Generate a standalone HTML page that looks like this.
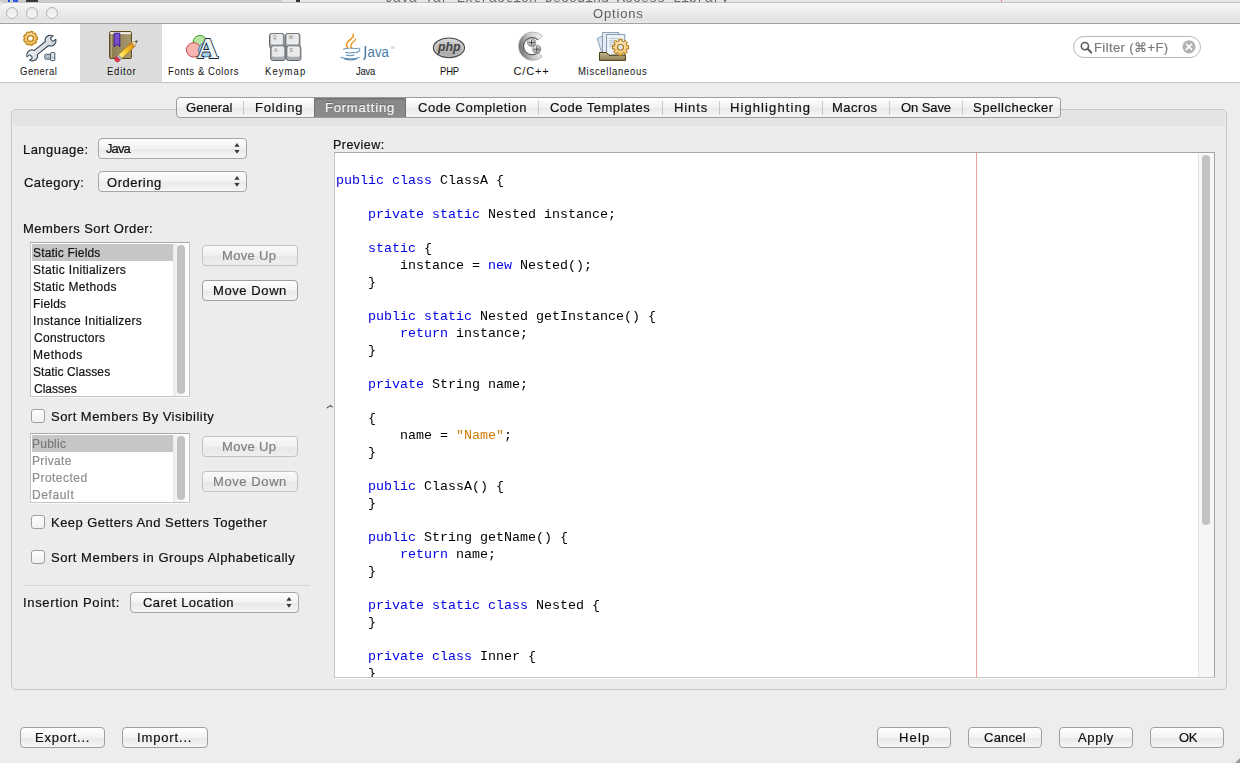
<!DOCTYPE html>
<html><head><meta charset="utf-8">
<style>
*{margin:0;padding:0;box-sizing:border-box}
html,body{width:1240px;height:763px;overflow:hidden;background:#ededed;font-family:"Liberation Sans",sans-serif;color:#000}
.a{position:absolute}
.t{position:absolute;white-space:nowrap;line-height:20px;will-change:transform;-webkit-text-stroke:0.2px currentColor}
#strip{left:0;top:0;width:1240px;height:2px;background:linear-gradient(90deg,#cdcdcd 0,#cdcdcd 282px,#e6e6e6 282px)}
#title{left:0;top:2px;width:1244px;height:22px;background:linear-gradient(#f6f6f6,#e3e3e3 85%,#e8e8e8);border-bottom:1px solid #a2a2a2;border-top:1px solid #c4c4c4;border-radius:5px 5px 0 0}
.circ{position:absolute;top:7px;width:12px;height:12px;border-radius:50%;border:1px solid #b4b4b4;background:linear-gradient(#eaeaea,#f8f8f8)}
#toolbar{left:0;top:24px;width:1240px;height:59px;background:#fff;border-bottom:1px solid #c4c4c4}
#sel{left:80px;top:24px;width:82px;height:58px;background:#dcdcdc}
#panel{left:11px;top:109px;width:1216px;height:581px;border:1px solid #c6c6c6;border-radius:5px;background:#ececec}
#band{left:13px;top:110px;width:1212px;height:16px;background:#e4e4e4;border-radius:4px 4px 0 0}
#tabs{left:176px;top:97px;width:885px;height:21px;border:1px solid #9b9b9b;border-radius:4px;background:linear-gradient(#ffffff,#f1f1f1 50%,#e9e9e9 51%,#f5f5f5);overflow:hidden}
.sep{position:absolute;top:3px;width:1px;height:14px;background:#c8c8c8}
.combo{position:absolute;height:20px;border:1px solid #a5a5a5;border-radius:4px;background:linear-gradient(#fefefe,#f2f2f2 50%,#e8e8e8 51%,#f6f6f6)}
.list{position:absolute;border:1px solid #c3c3c3;border-top-color:#a9a9a9;background:#fff;box-shadow:0 1px 0 #fafafa}
.sb2{position:absolute;background:linear-gradient(90deg,#ebebeb,#f6f6f6 35%,#fafafa 85%,#fff)}
.row{position:absolute;left:1px;height:17px;width:141px}
.sb{position:absolute;background:#f6f6f6;border-left:1px solid #e6e6e6}
.thumb{position:absolute;background:#c2c2c2;border-radius:4px}
.btn{position:absolute;height:21px;border:1px solid #9f9f9f;border-radius:4px;background:linear-gradient(#ffffff,#f3f3f3 50%,#e9e9e9 51%,#f4f4f4)}
.dis{border-color:#c2c2c2;background:linear-gradient(#fafafa,#f0f0f0 50%,#e8e8e8 51%,#eeeeee)}
.cb{position:absolute;width:14px;height:14px;border:1px solid #9e9e9e;border-radius:3px;background:linear-gradient(#fff,#f0f0f0)}
#editor{left:334px;top:152px;width:881px;height:526px;border:1px solid #a6a6a6;border-bottom-color:#c8c8c8;border-left-color:#c4c4c4;background:#fff;overflow:hidden;box-shadow:0 1px 0 #fafafa}
pre{position:absolute;left:1px;top:2px;will-change:transform;font-family:"Liberation Mono",monospace;font-size:13.333px;line-height:17px;color:#000}
.k{color:#0000e6}
.s{color:#ce7b00}
</style></head><body>
<div class="shape"><div class="a" id="strip"></div>
<div class="a" style="left:385px;top:-8px;will-change:transform;font-family:'Liberation Mono',monospace;font-size:13.333px;line-height:13px;color:#6a6a6a;white-space:pre">Java Tar Extraction Decoding Access Library</div>
<div class="a" style="left:8px;top:0;width:2px;height:2px;background:#1a4fd6"></div>
<div class="a" style="left:13px;top:0;width:5px;height:2px;background:#2a5ce0"></div>
<div class="a" style="left:26px;top:0;width:12px;height:2px;background:#3a3a3a"></div>
<div class="a" style="left:296px;top:0;width:4px;height:2px;background:#333"></div>
<div class="a" style="left:1001px;top:0;width:1px;height:2px;background:#e88080"></div>
<div class="a" id="title"></div>
<div class="circ" style="left:6px"></div>
<div class="circ" style="left:26px"></div>
<div class="circ" style="left:46px"></div>
<div class="a" id="toolbar"></div>
<div class="a" id="sel"></div>
<svg class="a" style="left:18px;top:28px" width="44" height="36" viewBox="0 0 44 36"><defs><linearGradient id="gw" x1="0" y1="0" x2="1" y2="1"><stop offset="0" stop-color="#f4f5f6"/><stop offset="1" stop-color="#c9ced3"/></linearGradient>
<radialGradient id="gg" cx="0.5" cy="0.4" r="0.6"><stop offset="0" stop-color="#fff3d8"/><stop offset="1" stop-color="#f0b850"/></radialGradient></defs>
<path d="M19.37,9.06 L19.37,11.74 L18.29,11.53 L17.66,13.26 L18.62,13.79 L16.91,15.84 L16.21,14.99 L14.61,15.91 L15.01,16.94 L12.38,17.40 L12.40,16.30 L10.58,15.98 L10.22,17.02 L7.91,15.68 L8.63,14.85 L7.44,13.44 L6.50,14.01 L5.59,11.50 L6.67,11.32 L6.67,9.48 L5.59,9.30 L6.50,6.79 L7.44,7.36 L8.63,5.95 L7.91,5.12 L10.22,3.78 L10.58,4.82 L12.40,4.50 L12.38,3.40 L15.01,3.86 L14.61,4.89 L16.21,5.81 L16.91,4.96 L18.62,7.01 L17.66,7.54 L18.29,9.27Z" fill="url(#gg)" stroke="#c08418" stroke-width="1.1" stroke-linejoin="round"/>
<circle cx="12.5" cy="10.4" r="3.0" fill="#fff" stroke="#c8861a" stroke-width="1.5"/>
<g transform="translate(14.2,27.4) rotate(-38.8)" fill="url(#gw)" stroke="#34495c" stroke-width="1.1" stroke-linejoin="round">
<path d="M-5.0,-2.2 L-2.0,-2.2 L-1.2,-1.4 L-1.2,1.4 L-2.0,2.2 L-5.0,2.2 A5.6,5.6 0 0 0 3.2,4.6 L4.5,2.6 L19,2.6 L20.3,4.6 A5.6,5.6 0 0 0 28.5,2.2 L25.5,2.2 L24.7,1.4 L24.7,-1.4 L25.5,-2.2 L28.5,-2.2 A5.6,5.6 0 0 0 20.3,-4.6 L19,-2.6 L4.5,-2.6 L3.2,-4.6 A5.6,5.6 0 0 0 -5.0,-2.2 Z"/>
</g>
<rect x="26.9" y="26.3" width="6.4" height="4.8" rx="0.6" fill="#f2f4f6" stroke="#3c4f60" stroke-width="1"/>
<path d="M28.9,26.6 V30.8 M30.9,26.6 V30.8" stroke="#6d7b88" stroke-width="0.9"/>
<rect x="32.6" y="24.6" width="4.2" height="8" rx="0.9" fill="#e4e9ee" stroke="#3c4f60" stroke-width="1"/>
<path d="M33.4,29.5 H36" stroke="#b8c2cc" stroke-width="1.5"/>
</svg>
<svg class="a" style="left:104px;top:28px" width="38" height="36" viewBox="0 0 38 36"><defs><linearGradient id="bk" x1="0" x2="1"><stop offset="0" stop-color="#8c7c50"/><stop offset="1" stop-color="#a89a70"/></linearGradient>
<linearGradient id="pc" x1="0" y1="0" x2="1" y2="0"><stop offset="0" stop-color="#fff080"/><stop offset="0.5" stop-color="#f3c62c"/><stop offset="1" stop-color="#e09010"/></linearGradient></defs>
<rect x="5.6" y="3.5" width="21.8" height="27" rx="1.2" fill="url(#bk)" stroke="#5a4918" stroke-width="1"/>
<rect x="6.2" y="4.2" width="20.6" height="1.9" fill="#f4f4f0"/>
<path d="M7.4,6.5 V30" stroke="#c8bc98" stroke-width="0.8"/>
<path d="M10.2,5.2 H15.8 V18.8 L13,16.3 L10.2,18.8 Z" fill="#7a50d0" stroke="#3a1c98" stroke-width="1"/>
<g transform="translate(13,31.5) rotate(-43)">
<rect x="4" y="-2.6" width="18" height="5.2" fill="url(#pc)" stroke="#9a6a10" stroke-width="0.7"/>
<rect x="1.8" y="-2.6" width="2.4" height="5.2" fill="#b8c0c8" stroke="#6a7078" stroke-width="0.5"/>
<path d="M1.8,-2.6 H0.5 A2.6,2.6 0 0 0 0.5,2.6 H1.8 Z" fill="#e83850" stroke="#a02030" stroke-width="0.6"/>
<path d="M22,-2.6 L27.5,0 L22,2.6 Z" fill="#f0dcb8" stroke="#9a7a40" stroke-width="0.5"/>
<path d="M25.5,-0.95 L28.2,0 L25.5,0.95 Z" fill="#202020"/>
</g>
</svg>
<svg class="a" style="left:184px;top:30px" width="38" height="32" viewBox="0 0 38 32"><circle cx="16" cy="12.3" r="6.9" fill="#b6e4a4" stroke="#3fa021" stroke-width="1"/>
<circle cx="9.6" cy="19.9" r="7.2" fill="#f8b4b0" stroke="#c24a4a" stroke-width="1"/>
<circle cx="21.6" cy="19.9" r="7" fill="#a6d0f2" stroke="#3f7bb0" stroke-width="1"/>
<text x="23.6" y="28.4" text-anchor="middle" font-family="Liberation Serif" font-weight="bold" font-size="29.5" fill="#eef3f8" stroke="#1c2630" stroke-width="1.8" paint-order="stroke" stroke-linejoin="round">A</text>
</svg>
<svg class="a" style="left:264px;top:28px" width="42" height="36" viewBox="0 0 42 36"><rect x="5.5" y="5.5" width="14.6" height="14.6" rx="2.2" fill="#a9adb1" stroke="#62676c" stroke-width="1"/>
<rect x="7.2" y="6.3" width="11.2" height="9.6" rx="1.2" fill="#e9eaeb" stroke="#f8f8f8" stroke-width="0.6"/>
<text x="9" y="11.2" font-family="Liberation Sans" font-size="4.5" fill="#777">Q</text><rect x="21.3" y="5.5" width="14.6" height="14.6" rx="2.2" fill="#a9adb1" stroke="#62676c" stroke-width="1"/>
<rect x="23.0" y="6.3" width="11.2" height="9.6" rx="1.2" fill="#e9eaeb" stroke="#f8f8f8" stroke-width="0.6"/>
<text x="24.8" y="11.2" font-family="Liberation Sans" font-size="4.5" fill="#777">W</text><rect x="6.7" y="17.9" width="14.6" height="14.6" rx="2.2" fill="#a9adb1" stroke="#62676c" stroke-width="1"/>
<rect x="8.4" y="18.7" width="11.2" height="9.6" rx="1.2" fill="#e9eaeb" stroke="#f8f8f8" stroke-width="0.6"/>
<text x="10.2" y="23.599999999999998" font-family="Liberation Sans" font-size="4.5" fill="#777">A</text><rect x="22.3" y="17.9" width="14.6" height="14.6" rx="2.2" fill="#a9adb1" stroke="#62676c" stroke-width="1"/>
<rect x="24.0" y="18.7" width="11.2" height="9.6" rx="1.2" fill="#e9eaeb" stroke="#f8f8f8" stroke-width="0.6"/>
<text x="25.8" y="23.599999999999998" font-family="Liberation Sans" font-size="4.5" fill="#777">S</text></svg>
<svg class="a" style="left:338px;top:30px" width="58" height="32" viewBox="0 0 58 32"><path d="M9.6,17.5 C6.5,14 10.5,11 13.5,8.5 C15.5,6.8 16,5.6 15.2,4.2" fill="none" stroke="#eb9212" stroke-width="1.4" stroke-linecap="round"/>
<path d="M13.8,18 C11.8,15.6 13.3,13.4 15.2,12 C16.4,11.2 17.3,10.4 17.4,9.2" fill="none" stroke="#eb9212" stroke-width="1.3" stroke-linecap="round"/>
<path d="M5.5,19.2 C9,18 16,18 19.5,18.8 M21,18.2 C23,19.5 21.5,21.8 18.5,22.6 M7.5,22.3 C10,23 15,23 17.3,22.3 M8.3,25 C10.5,25.8 14,25.8 16,25 M3,27.3 C6,29 17,29.5 21,27.5 M6.5,29 C10,30 16,30 19,28.8" fill="none" stroke="#5d8db4" stroke-width="1.1" stroke-linecap="round"/>
<path d="M27.4,16 V26.6 C27.4,28.3 26.8,29.2 25.4,29.6" fill="none" stroke="#4a7ca8" stroke-width="1.55"/>
<text x="29.6" y="26.7" font-family="Liberation Sans" font-size="14.5" fill="#4a7ca8" transform="translate(29.6,0) scale(0.91,1) translate(-29.6,0)">ava</text>
<text x="52.2" y="19" font-family="Liberation Sans" font-size="3" fill="#9ab4cc">TM</text>
</svg>
<svg class="a" style="left:428px;top:32px" width="42" height="30" viewBox="0 0 42 30"><defs><linearGradient id="ph" x1="0" y1="0" x2="0" y2="1"><stop offset="0" stop-color="#d8d8d8"/><stop offset="0.5" stop-color="#b9b9b9"/><stop offset="1" stop-color="#a6a6a6"/></linearGradient></defs>
<ellipse cx="20.95" cy="15.85" rx="15.6" ry="9.8" fill="url(#ph)" stroke="#4a4a4a" stroke-width="1.1"/>
<ellipse cx="20.95" cy="15.85" rx="14.3" ry="8.6" fill="none" stroke="#e8e8e8" stroke-width="0.6" opacity="0.7"/>
<text x="10" y="18.6" font-family="Liberation Sans" font-size="12.5" font-weight="bold" font-style="italic" fill="#444" transform="translate(10,0) scale(0.98,1) translate(-10,0)">php</text>
</svg>
<svg class="a" style="left:514px;top:28px" width="36" height="36" viewBox="0 0 36 36"><defs><linearGradient id="cc" x1="0.1" y1="0.5" x2="0.9" y2="0.3"><stop offset="0" stop-color="#7e7e7e"/><stop offset="0.45" stop-color="#c4c4c4"/><stop offset="1" stop-color="#eeeeee"/></linearGradient>
<radialGradient id="ball" cx="0.4" cy="0.35" r="0.7"><stop offset="0" stop-color="#f4f4f4"/><stop offset="1" stop-color="#8a8a8a"/></radialGradient></defs>
<path d="M28.4,7.8 A14.2,14.2 0 1 0 28.4,28.6 L24,24.5 A8.6,8.6 0 1 1 24,11.9 Z" fill="url(#cc)" stroke="#9a9a9a" stroke-width="0.6"/>
<path d="M24,24.5 A8.6,8.6 0 1 1 24,11.9" fill="none" stroke="#3a3a3a" stroke-width="0.9"/>
<circle cx="17.5" cy="14.4" r="4.2" fill="url(#ball)" stroke="#6a6a6a" stroke-width="0.5"/>
<circle cx="22.7" cy="21.2" r="4.2" fill="url(#ball)" stroke="#6a6a6a" stroke-width="0.5"/>
<path d="M14.6,14.4 H20.4 M17.5,11.8 V17 M19.8,21.2 H25.6 M22.7,18.6 V23.8" stroke="#333" stroke-width="0.8"/>
</svg>
<svg class="a" style="left:594px;top:28px" width="40" height="36" viewBox="0 0 40 36"><defs><linearGradient id="tr" x1="0" y1="0" x2="0" y2="1"><stop offset="0" stop-color="#c4b890"/><stop offset="1" stop-color="#8e7e52"/></linearGradient>
<radialGradient id="g2" cx="0.5" cy="0.35" r="0.7"><stop offset="0" stop-color="#fff2d6"/><stop offset="1" stop-color="#f2b850"/></radialGradient></defs>
<path d="M3.2,10.5 L8.5,8 L12.5,24.5 L8,25.5 Z" fill="#dbe5ef" stroke="#7f95ab" stroke-width="0.9"/>
<rect x="8.5" y="4.6" width="16.2" height="20" fill="#e6edf4" stroke="#7f95ab" stroke-width="0.9"/>
<rect x="12.6" y="6.6" width="18.2" height="20.5" fill="#eef3f8" stroke="#7890a8" stroke-width="0.9"/>
<path d="M15,10.3 H24 M15,12.4 H22 M15,14.4 H21 M15,16.4 H20 M15,18.4 H20" stroke="#a8b4c0" stroke-width="0.7"/>
<path d="M5.5,24.5 H12.5 L15,27.3 H31.5 V32.4 H5.5 Z" fill="url(#tr)" stroke="#4a3c16" stroke-width="1"/>
<path d="M34.61,17.52 L34.61,21.08 L32.75,20.67 L31.89,22.75 L33.49,23.77 L30.97,26.29 L29.95,24.69 L27.87,25.55 L28.28,27.41 L24.72,27.41 L25.13,25.55 L23.05,24.69 L22.03,26.29 L19.51,23.77 L21.11,22.75 L20.25,20.67 L18.39,21.08 L18.39,17.52 L20.25,17.93 L21.11,15.85 L19.51,14.83 L22.03,12.31 L23.05,13.91 L25.13,13.05 L24.72,11.19 L28.28,11.19 L27.87,13.05 L29.95,13.91 L30.97,12.31 L33.49,14.83 L31.89,15.85 L32.75,17.93Z" fill="url(#g2)" stroke="#b27712" stroke-width="1"/>
<circle cx="26.5" cy="19.3" r="3" fill="#dbe6f0" stroke="#b27712" stroke-width="1.1"/>
</svg>

<div class="a" style="left:1073px;top:36px;width:128px;height:22px;border:1px solid #b8b8b8;border-radius:11px;background:#fff"></div>
<svg class="a" style="left:0;top:0" width="1240" height="80" viewBox="0 0 1240 80"><circle cx="1084.9" cy="46.1" r="3.6" fill="none" stroke="#5a5a5a" stroke-width="1.6"/>
<path d="M1087.6,48.8 L1091.3,52.6" stroke="#5a5a5a" stroke-width="2" stroke-linecap="round"/>
<circle cx="1189" cy="46.8" r="6.6" fill="#b3b3b3"/>
<path d="M1186.4,44.2 L1191.6,49.4 M1191.6,44.2 L1186.4,49.4" stroke="#fff" stroke-width="1.6" stroke-linecap="round"/>
</svg>

<div class="a" id="panel"></div>
<div class="a" id="band"></div>
<div class="a" id="tabs">
  <div class="sep" style="left:66px"></div>
  <div class="a" style="left:137px;top:0;width:92px;height:19px;background:linear-gradient(#6c6c6c,#878787 2px,#8b8b8b);border-left:1px solid #737373;border-right:1px solid #737373"></div>
  <div class="sep" style="left:361px"></div>
  <div class="sep" style="left:485px"></div>
  <div class="sep" style="left:542px"></div>
  <div class="sep" style="left:645px"></div>
  <div class="sep" style="left:712px"></div>
  <div class="sep" style="left:785px"></div>
</div>
<div class="combo" style="left:98px;top:138px;width:149px;height:21px"><svg class="a" style="right:6px;top:3px" width="6" height="13" viewBox="0 0 6 13"><path d="M0.4,4.7 L3,0.9 L5.6,4.7 Z M0.4,8 L3,11.8 L5.6,8 Z" fill="#383838"/></svg></div>
<div class="combo" style="left:98px;top:171px;width:149px;height:21px"><svg class="a" style="right:6px;top:3px" width="6" height="13" viewBox="0 0 6 13"><path d="M0.4,4.7 L3,0.9 L5.6,4.7 Z M0.4,8 L3,11.8 L5.6,8 Z" fill="#383838"/></svg></div>
<div class="list" style="left:30px;top:242px;width:160px;height:155px">
  <div class="row" style="top:1px;background:#c6c6c6"></div>
  <div class="sb2" style="left:142px;top:1px;width:15px;height:152px"></div>
  <div class="thumb" style="left:146px;top:2px;width:8px;height:149px"></div>
</div>
<div class="btn dis" style="left:202px;top:245px;width:96px"></div>
<div class="btn" style="left:202px;top:280px;width:96px"></div>
<div class="cb" style="left:31px;top:409px"></div>
<div class="list" style="left:30px;top:433px;width:160px;height:70px">
  <div class="row" style="top:1px;background:#c6c6c6"></div>
  <div class="sb2" style="left:142px;top:1px;width:15px;height:67px"></div>
  <div class="thumb" style="left:146px;top:2px;width:8px;height:64px"></div>
</div>
<div class="btn dis" style="left:202px;top:436px;width:96px"></div>
<div class="btn dis" style="left:202px;top:471px;width:96px"></div>
<div class="cb" style="left:31px;top:515px"></div>
<div class="cb" style="left:31px;top:550px"></div>
<div class="a" style="left:25px;top:585px;width:285px;height:1px;background:#d6d6d6"></div>
<div class="combo" style="left:130px;top:592px;width:169px;height:21px"><svg class="a" style="right:6px;top:3px" width="6" height="13" viewBox="0 0 6 13"><path d="M0.4,4.7 L3,0.9 L5.6,4.7 Z M0.4,8 L3,11.8 L5.6,8 Z" fill="#383838"/></svg></div>
<svg class="a" style="left:325px;top:402px" width="10" height="10" viewBox="0 0 10 10"><path d="M2.3,5.8 L5.6,3.4 L7.2,5" fill="none" stroke="#555" stroke-width="1.1" stroke-linecap="round"/></svg>
<svg class="a" style="left:1234px;top:757px" width="6" height="6" viewBox="0 0 6 6"><path d="M6,1 L6,6 L1,6 Z" fill="#9a9a9a"/></svg>
<div class="a" id="editor">
<pre>

<span class="k">public</span> <span class="k">class</span> ClassA {

    <span class="k">private</span> <span class="k">static</span> Nested instance;

    <span class="k">static</span> {
        instance = <span class="k">new</span> Nested();
    }

    <span class="k">public</span> <span class="k">static</span> Nested getInstance() {
        <span class="k">return</span> instance;
    }

    <span class="k">private</span> String name;

    {
        name = <span class="s">"Name"</span>;
    }

    <span class="k">public</span> ClassA() {
    }

    <span class="k">public</span> String getName() {
        <span class="k">return</span> name;
    }

    <span class="k">private</span> <span class="k">static</span> <span class="k">class</span> Nested {
    }

    <span class="k">private</span> <span class="k">class</span> Inner {
    }
}
</pre>
  <div class="a" style="left:641px;top:0;width:1px;height:526px;background:#f4a0a0"></div>
  <div class="sb" style="left:863px;top:0;width:16px;height:524px"></div>
  <div class="thumb" style="left:867px;top:2px;width:8px;height:370px"></div>
</div>
<div class="btn" style="left:20px;top:727px;width:85px"></div>
<div class="btn" style="left:122px;top:727px;width:86px"></div>
<div class="btn" style="left:877px;top:727px;width:74px"></div>
<div class="btn" style="left:968px;top:727px;width:74px"></div>
<div class="btn" style="left:1059px;top:727px;width:74px"></div>
<div class="btn" style="left:1150px;top:727px;width:74px"></div>
</div>
<div class="t" id="tt" style="left:593.00px;top:4.00px;font-size:13px;letter-spacing:0.833px;color:#5e5e5e;-webkit-text-stroke:0;">Options</div>
<div class="t" id="l1" style="left:20.00px;top:61.00px;font-size:11px;letter-spacing:0.603px;color:#111;transform:scaleX(0.8600);transform-origin:0 0;-webkit-text-stroke:0;will-change:auto;">General</div>
<div class="t" id="l2" style="left:106.80px;top:61.00px;font-size:11px;letter-spacing:0.933px;color:#111;transform:scaleX(0.8600);transform-origin:0 0;-webkit-text-stroke:0;will-change:auto;">Editor</div>
<div class="t" id="l3" style="left:167.80px;top:61.00px;font-size:11px;letter-spacing:0.700px;color:#111;transform:scaleX(0.8600);transform-origin:0 0;-webkit-text-stroke:0;will-change:auto;">Fonts &amp; Colors</div>
<div class="t" id="l4" style="left:265.00px;top:61.00px;font-size:11px;letter-spacing:1.281px;color:#111;transform:scaleX(0.8600);transform-origin:0 0;-webkit-text-stroke:0;will-change:auto;">Keymap</div>
<div class="t" id="l5" style="left:356.00px;top:61.00px;font-size:11px;letter-spacing:-0.269px;color:#111;transform:scaleX(0.8600);transform-origin:0 0;-webkit-text-stroke:0;will-change:auto;">Java</div>
<div class="t" id="l6" style="left:439.60px;top:61.00px;font-size:11px;letter-spacing:-0.172px;color:#111;transform:scaleX(0.8600);transform-origin:0 0;-webkit-text-stroke:0;will-change:auto;">PHP</div>
<div class="t" id="l7" style="left:513.40px;top:61.01px;font-size:11px;letter-spacing:0.900px;color:#111;-webkit-text-stroke:0;will-change:auto;">C/C++</div>
<div class="t" id="l8" style="left:578.40px;top:61.00px;font-size:11px;letter-spacing:0.845px;color:#111;transform:scaleX(0.8600);transform-origin:0 0;-webkit-text-stroke:0;will-change:auto;">Miscellaneous</div>
<div class="t" id="flt" style="left:1093.80px;top:38.01px;font-size:13px;letter-spacing:0.409px;color:#7a7a7a;">Filter (⌘+F)</div>
<div class="t" id="t1" style="left:186.00px;top:98.00px;font-size:13px;letter-spacing:0.017px;color:#111;">General</div>
<div class="t" id="t2" style="left:255.00px;top:98.00px;font-size:13px;letter-spacing:0.800px;color:#111;">Folding</div>
<div class="t" id="t3" style="left:325.40px;top:98.01px;font-size:13px;letter-spacing:0.778px;color:#f2f2f2;text-shadow:0 -1px 0 rgba(0,0,0,.25);">Formatting</div>
<div class="t" id="t4" style="left:418.00px;top:98.00px;font-size:13px;letter-spacing:0.571px;color:#111;">Code Completion</div>
<div class="t" id="t5" style="left:550.40px;top:98.00px;font-size:13px;letter-spacing:0.462px;color:#111;">Code Templates</div>
<div class="t" id="t6" style="left:673.60px;top:98.00px;font-size:13px;letter-spacing:0.900px;color:#111;">Hints</div>
<div class="t" id="t7" style="left:730.20px;top:98.00px;font-size:13px;letter-spacing:1.091px;color:#111;">Highlighting</div>
<div class="t" id="t8" style="left:832.40px;top:98.00px;font-size:13px;letter-spacing:0.500px;color:#111;">Macros</div>
<div class="t" id="t9" style="left:901.20px;top:98.00px;font-size:13px;letter-spacing:-0.083px;color:#111;">On Save</div>
<div class="t" id="t10" style="left:973.20px;top:98.00px;font-size:13px;letter-spacing:0.518px;color:#111;">Spellchecker</div>
<div class="t" id="lang" style="left:23.00px;top:140.01px;font-size:13px;letter-spacing:0.450px;color:#111;">Language:</div>
<div class="t" id="langv" style="left:106.00px;top:139.01px;font-size:13px;letter-spacing:-0.900px;color:#111;">Java</div>
<div class="t" id="cat" style="left:24.20px;top:173.01px;font-size:13px;letter-spacing:0.438px;color:#111;">Category:</div>
<div class="t" id="catv" style="left:107.20px;top:173.01px;font-size:13px;letter-spacing:0.529px;color:#111;">Ordering</div>
<div class="t" id="mso" style="left:23.00px;top:219.01px;font-size:13px;letter-spacing:0.422px;color:#111;">Members Sort Order:</div>
<div class="t" id="i1" style="left:32.62px;top:243.01px;font-size:12px;letter-spacing:0.167px;color:#111;">Static Fields</div>
<div class="t" id="i2" style="left:32.62px;top:260.01px;font-size:12px;letter-spacing:0.339px;color:#111;">Static Initializers</div>
<div class="t" id="i3" style="left:32.62px;top:277.01px;font-size:12px;letter-spacing:0.315px;color:#111;">Static Methods</div>
<div class="t" id="i4" style="left:32.62px;top:294.01px;font-size:12px;letter-spacing:0.200px;color:#111;">Fields</div>
<div class="t" id="i5" style="left:32.62px;top:311.01px;font-size:12px;letter-spacing:0.340px;color:#111;">Instance Initializers</div>
<div class="t" id="i6" style="left:33.62px;top:328.01px;font-size:12px;letter-spacing:0.273px;color:#111;">Constructors</div>
<div class="t" id="i7" style="left:32.62px;top:345.01px;font-size:12px;letter-spacing:0.517px;color:#111;">Methods</div>
<div class="t" id="i8" style="left:32.62px;top:362.01px;font-size:12px;letter-spacing:0.085px;color:#111;">Static Classes</div>
<div class="t" id="i9" style="left:33.62px;top:379.01px;font-size:12px;letter-spacing:0.017px;color:#111;">Classes</div>
<div class="t" id="mu1" style="left:222.20px;top:246.00px;font-size:13px;letter-spacing:0.333px;color:#808080;">Move Up</div>
<div class="t" id="md1" style="left:213.40px;top:281.01px;font-size:13px;letter-spacing:0.588px;color:#111;">Move Down</div>
<div class="t" id="smv" style="left:50.80px;top:407.00px;font-size:13px;letter-spacing:0.480px;color:#111;">Sort Members By Visibility</div>
<div class="t" id="p1" style="left:32.12px;top:434.01px;font-size:12px;letter-spacing:0.240px;color:#7a7a7a;">Public</div>
<div class="t" id="p2" style="left:32.12px;top:451.01px;font-size:12px;letter-spacing:0.333px;color:#8e8e8e;">Private</div>
<div class="t" id="p3" style="left:32.12px;top:468.01px;font-size:12px;letter-spacing:0.463px;color:#8e8e8e;">Protected</div>
<div class="t" id="p4" style="left:32.12px;top:485.01px;font-size:12px;letter-spacing:0.617px;color:#8e8e8e;">Default</div>
<div class="t" id="mu2" style="left:222.20px;top:437.00px;font-size:13px;letter-spacing:0.333px;color:#808080;">Move Up</div>
<div class="t" id="md2" style="left:213.40px;top:472.00px;font-size:13px;letter-spacing:0.588px;color:#808080;">Move Down</div>
<div class="t" id="kg" style="left:50.80px;top:513.00px;font-size:13px;letter-spacing:0.459px;color:#111;">Keep Getters And Setters Together</div>
<div class="t" id="sg" style="left:50.80px;top:548.01px;font-size:13px;letter-spacing:0.528px;color:#111;">Sort Members in Groups Alphabetically</div>
<div class="t" id="ip" style="left:23.40px;top:593.01px;font-size:13px;letter-spacing:0.647px;color:#111;">Insertion Point:</div>
<div class="t" id="ipv" style="left:143.40px;top:593.01px;font-size:13px;letter-spacing:0.462px;color:#111;">Caret Location</div>
<div class="t" id="pv" style="left:333.40px;top:135.01px;font-size:12.5px;letter-spacing:0.471px;color:#111;">Preview:</div>
<div class="t" id="ex" style="left:35.40px;top:728.00px;font-size:13px;letter-spacing:0.750px;color:#111;">Export...</div>
<div class="t" id="im" style="left:137.40px;top:728.00px;font-size:13px;letter-spacing:0.850px;color:#111;">Import...</div>
<div class="t" id="hp" style="left:899.00px;top:728.00px;font-size:13px;letter-spacing:1.167px;color:#111;">Help</div>
<div class="t" id="cn" style="left:984.20px;top:728.00px;font-size:13px;letter-spacing:0.240px;color:#111;">Cancel</div>
<div class="t" id="ap" style="left:1078.40px;top:728.00px;font-size:13px;letter-spacing:0.675px;color:#111;">Apply</div>
<div class="t" id="ok" style="left:1178.80px;top:728.00px;font-size:13px;letter-spacing:-0.400px;color:#111;">OK</div>
</body></html>
